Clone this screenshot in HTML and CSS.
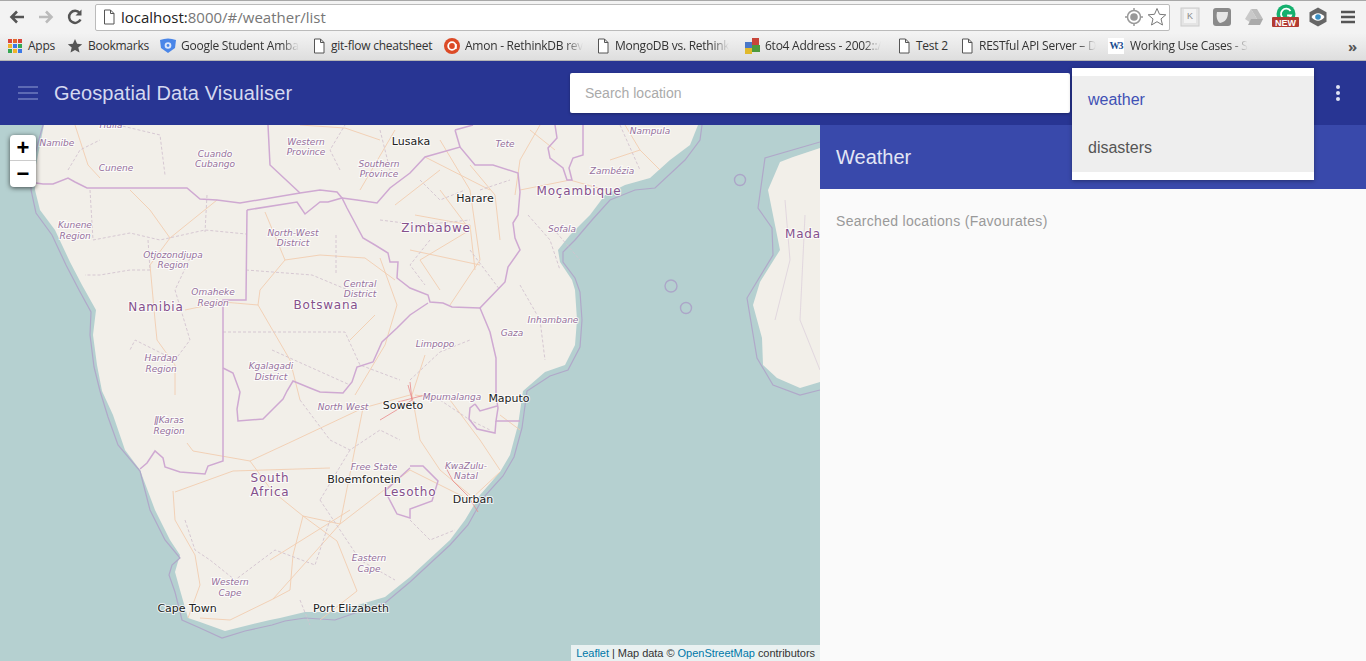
FILE: index.html
```html
<!DOCTYPE html>
<html lang="en">
<head>
    <meta charset="UTF-8">
    <meta name="viewport" content="width=device-width, initial-scale=1.0">
    <title>Geospatial Data Visualiser</title>
    <link rel="stylesheet" href="styles.css">
</head>
<body>
    <svg class="defs" width="0" height="0">
        <symbol id="page" viewBox="0 0 14 16">
            <path d="M2.500 1h6l3.500 3.500v10.500h-9.500z M8.500 1v3.500h3.500" fill="#fff" stroke="#555" stroke-width="1"/>
        </symbol>
    </svg>

    <!-- browser toolbar -->
    <div class="toolbar">
        <svg class="nav" width="20" height="20" viewBox="0 0 20 20"><path d="M17 10H5M10 4.500L4.500 10l5.500 5.500" fill="none" stroke="#555" stroke-width="2.600"/></svg>
        <svg class="nav" width="20" height="20" viewBox="0 0 20 20"><path d="M3 10h12M10 4.500l5.500 5.500-5.500 5.500" fill="none" stroke="#bbb" stroke-width="2.600"/></svg>
        <svg class="nav" width="20" height="20" viewBox="0 0 20 20"><path d="M15.500 12.500a6 6 0 1 1-.8-6.500" fill="none" stroke="#555" stroke-width="2.500"/><path d="M16.500 2.500v6h-6z" fill="#555"/></svg>
        <div class="omnibox">
            <svg class="omni-page" width="14" height="16"><use href="#page"/></svg>
            <span class="url"><span class="url-host">localhost:</span>8000/#/weather/list</span>
            <svg class="omni-icon" width="18" height="18" viewBox="0 0 18 18"><circle cx="9" cy="9" r="6.500" fill="none" stroke="#999" stroke-width="1.500"/><circle cx="9" cy="9" r="3.800" fill="#999"/><path d="M9 0v3M9 15v3M0 9h3M15 9h3" stroke="#999" stroke-width="1.500"/></svg>
            <svg class="omni-icon" width="20" height="20" viewBox="0 0 20 20"><path d="M10 1.500l2.500 5.800 6.300.5-4.800 4.100 1.500 6.100-5.500-3.300-5.500 3.300 1.500-6.100-4.800-4.100 6.300-.5z" fill="#fff" stroke="#777"/></svg>
        </div>
        <div class="extensions">
            <svg width="20" height="20" viewBox="0 0 20 20"><rect x="1" y="1" width="18" height="18" fill="#e4e4e4" stroke="#ccc"/><rect x="4" y="2" width="12" height="14" fill="#f3f3f3"/><text class="ext-k" x="10" y="12" text-anchor="middle">K</text></svg>
            <svg width="20" height="20" viewBox="0 0 20 20"><rect x="1" y="1" width="18" height="18" rx="3" fill="#8a8a8a"/><path d="M5 5h11c0 7-3 10-8 11-3-2-4-6-3-11z" fill="#e6e6e6"/></svg>
            <svg width="20" height="20" viewBox="0 0 20 20"><path d="M7 2h6l6 10h-6z" fill="#bdbdbd"/><path d="M7 2l6 10-3 6-9-6z" fill="#c9c9c9"/><path d="M7 12h12l-3 6H4z" fill="#aaa"/></svg>
            <svg class="ext-g" width="28" height="26" viewBox="0 0 28 26"><circle cx="14" cy="10" r="9.500" fill="#15b06e"/><path d="M18.500 7a5.200 5.200 0 1 0 .6 4.500h-4" fill="none" stroke="#fff" stroke-width="1.800"/><rect x="0" y="13" width="27" height="10" rx="1" fill="#b23a32"/><text class="ext-new" x="13.500" y="21.500" text-anchor="middle">NEW</text></svg>
            <svg width="20" height="20" viewBox="0 0 20 20"><path d="M10 .5l8.500 4.700v9.600L10 19.500l-8.500-4.700V5.200z" fill="#666"/><path d="M3.500 10c3.500-5 9.500-5 13 0-3.500 5-9.500 5-13 0z" fill="#fff"/><circle cx="10" cy="10" r="2.800" fill="#3a8fc4"/></svg>
            <svg width="16" height="16" viewBox="0 0 16 16"><path d="M1 3h14M1 8h14M1 13h14" stroke="#555" stroke-width="2.600"/></svg>
        </div>
    </div>

    <!-- bookmarks -->
    <div class="bookmarks">
        <div class="bm bm-apps">
            <svg width="14" height="14" viewBox="0 0 14 14">
                <path d="M0 0h4v4H0z" fill="#d9453c"/><path d="M5 0h4v4H5z" fill="#e2692c"/><path d="M10 0h4v4h-4z" fill="#d9453c"/>
                <path d="M0 5h4v4H0z" fill="#f1b32c"/><path d="M5 5h4v4H5z" fill="#3b78e7"/><path d="M10 5h4v4h-4z" fill="#36a853"/>
                <path d="M0 10h4v4H0z" fill="#36a853"/><path d="M5 10h4v4H5z" fill="#f1b32c"/><path d="M10 10h4v4h-4z" fill="#3b78e7"/>
            </svg>
            <span class="bm-text">Apps</span>
        </div>
        <div class="bm bm-star">
            <svg width="16" height="16" viewBox="0 0 16 16"><path d="M8 1l2.100 4.700 5.100.5-3.900 3.400 1.200 5L8 11.900l-4.500 2.700 1.200-5L.8 6.200l5.100-.5z" fill="#555"/></svg>
            <span class="bm-text">Bookmarks</span>
        </div>
        <div class="bm bm-google">
            <svg width="16" height="16" viewBox="0 0 16 16"><path d="M0 2q8-3 16 0l-1 8-7 5-7-5z" fill="#4a86e8"/><circle cx="8" cy="7.500" r="3.300" fill="#dbe7fb"/><circle cx="8" cy="7.500" r="1.400" fill="#4a86e8"/></svg>
            <span class="bm-text bm-fade">Google Student Amba</span>
        </div>
        <div class="bm bm-gitflow">
            <svg width="14" height="16"><use href="#page"/></svg>
            <span class="bm-text">git-flow cheatsheet</span>
        </div>
        <div class="bm bm-amon">
            <svg width="16" height="16" viewBox="0 0 16 16"><circle cx="8" cy="8" r="8" fill="#dc4a26"/><circle cx="8" cy="8" r="3.800" fill="none" stroke="#fff" stroke-width="1.800"/><path d="M11.800 6v5" stroke="#fff" stroke-width="1.800"/></svg>
            <span class="bm-text bm-fade">Amon - RethinkDB rev</span>
        </div>
        <div class="bm bm-mongo">
            <svg width="14" height="16"><use href="#page"/></svg>
            <span class="bm-text bm-fade">MongoDB vs. Rethink</span>
        </div>
        <div class="bm bm-6to4">
            <svg width="15" height="16" viewBox="0 0 15 16"><path d="M0 4h7v6H0z" fill="#4a78c8"/><path d="M7 0h7v7H7z" fill="#c8453a"/><path d="M7 7h8v7H7z" fill="#4d9a3c"/><path d="M0 10h7v6H0z" fill="#e0b92c"/></svg>
            <span class="bm-text bm-fade">6to4 Address - 2002::/</span>
        </div>
        <div class="bm bm-test">
            <svg width="14" height="16"><use href="#page"/></svg>
            <span class="bm-text">Test 2</span>
        </div>
        <div class="bm bm-rest">
            <svg width="14" height="16"><use href="#page"/></svg>
            <span class="bm-text bm-fade">RESTful API Server – D</span>
        </div>
        <div class="bm bm-w3">
            <span class="w3-logo">W3</span>
            <span class="bm-text bm-fade">Working Use Cases - S</span>
        </div>
        <span class="bm-more">»</span>
    </div>

    <!-- app header -->
    <header class="app-header">
        <svg class="menu-icon" width="20" height="14" viewBox="0 0 20 14"><path d="M0 1h20M0 7h20M0 13h20" stroke="#6f7cc0" stroke-width="1.600"/></svg>
        <div class="app-title">Geospatial Data Visualiser</div>
        <input class="search" type="text" placeholder="Search location">
        <svg class="kebab" width="6" height="18" viewBox="0 0 6 18"><circle cx="3" cy="3" r="2" fill="#dfe3f5"/><circle cx="3" cy="9" r="2" fill="#dfe3f5"/><circle cx="3" cy="15" r="2" fill="#dfe3f5"/></svg>
    </header>

    <div class="dropdown">
        <ul class="dropdown-list">
            <li class="dropdown-item active">weather</li>
            <li class="dropdown-item">disasters</li>
        </ul>
    </div>

    <div class="main">
        <div class="map">
            <svg class="map-svg" viewBox="0 125 820 536" width="820" height="536">
                <!-- land -->
                <path class="land" d="M44 125L36 165L35 190L40 210L55 230L70 262L82 285L96 310L93 335L97 365L102 391L113 415L125 450L140 470L155 510L170 540L180 555L177 565L175 572L180 590L188 618L200 622L225 631L245 626L270 620L280 618L305 612L340 612L358 605L385 597L410 577L450 540L465 520L480 495L500 472L510 455L518 425L523 391L545 372L565 365L575 345L577 320L575 290L572 280L560 262L558 250L570 235L590 215L605 195L625 185L650 178L670 160L690 145L698 125Z"/>
                <path class="land" d="M820 148L793 157L780 162L768 190L773 215L780 250L760 282L753 305L762 338L763 365L777 378L800 388L820 382Z"/>

                <!-- maritime border -->
                <path class="sea-border" d="M43 125L32 165L31 190L36 213L52 235L66 265L79 290L91 312L90 335L94 367L100 391L108 417L118 445L140 471L150 510L165 540L180 558L172 565L169 575L175 592L182 620L200 628L222 638L245 631L272 625L285 621L305 618L335 620L358 612L385 603L410 582L450 545L468 525L483 498L503 476L514 457L522 428L527 391L550 376L568 370L580 347L582 320L580 292L575 278L563 262L563 252L575 240L592 220L610 200L635 190L655 188L685 160L700 140L702 125"/>
                <path class="sea-border" d="M820 142L765 158L758 208L772 228L773 255L747 298L757 358L773 385L800 395L820 390"/>
                <circle class="islet" cx="740" cy="180" r="5.500"/>
                <circle class="islet" cx="671" cy="286" r="6"/>
                <circle class="islet" cx="686" cy="308" r="5.500"/>

                <!-- roads -->
                <path class="road" d="M75 125L88 165L100 178M130 190L150 210L170 238L217 200M170 238L150 265L155 320L157 340L175 365L175 395M265 212L285 260L260 290L258 305L290 360L300 400M258 305L223 302L185 310M300 125L345 128L380 140M395 130L360 190M285 260L320 255L365 258L395 280M380 258L397 305L385 345L355 395M187 443L193 451L250 461L293 441L363 408L410 395M175 492L233 471L330 468M250 461L272 491L303 516L340 524L410 470M303 516L337 541L357 591L320 620M303 516L293 555L290 590L273 599L230 620L200 618M273 599L340 524M173 491L175 520L195 555L200 585L188 618M340 524L363 408M410 470L470 500L500 472M440 140L470 190L480 260L450 305M410 250L480 265M425 157L490 190M520 190L570 180L605 190M540 125L520 160L515 195M610 160L640 150M625 125L640 150L660 170M415 395L450 400L480 440L500 470M425 355L412 395L420 440M420 440L440 470L470 495M440 190L470 230L420 260L440 290M415 215L470 225L475 270M470 165L495 195L500 240M395 205L440 170M350 340L375 315M530 130L555 150M500 415L520 430M270 560L350 510"/>
                <path class="road-major" d="M410 382L412 400L400 408L380 420M408 385L415 410M398 402L425 395M445 466L453 481L468 496L478 512"/>

                <!-- province lines -->
                <path class="dashed" d="M118 125L160 135L165 175M68 170L80 150L100 140M90 190L93 240L130 233L160 240L205 230L246 234M148 240L150 270L130 270L100 275L85 275M190 258L175 290L190 340L175 360L135 340L130 350M246 270L312 275L360 295M223 332L345 332L360 365L400 380M272 350L350 385M336 235L336 275M207 195L205 232M340 170L330 150L345 125M380 130L390 170M380 220L420 225L470 220M480 190L510 180M550 225L580 260M528 215L550 240L560 270M520 285L540 320L545 360M410 380L440 352L470 340M440 400L470 420L490 430M300 400L330 440L350 450L380 430L400 440M350 450L320 500M320 500L360 560L395 580M185 520L195 550L210 560L235 580L275 550L315 565L330 520M410 520L430 540L455 530M300 600L310 625M620 125L640 170M420 180L440 200L465 190M430 240L410 265L425 285M470 250L500 290"/>

                <!-- national borders -->
                <path class="border" d="M36 183L43 184L53 184L68 178L75 182L87 188L187 188L200 199L217 200L240 203L300 193L320 190L337 192L342 198"/>
                <path class="border" d="M247 210L297 202L305 214L320 202L328 202L342 198L347 208L355 223L363 238L375 245L388 253L390 262L398 262L397 278L410 288L428 295L430 302L443 303L452 307L480 308"/>
                <path class="border" d="M247 210L246 300L223 300L223 461L208 466L205 474L180 472L165 467L163 458L155 451L147 463L140 469"/>
                <path class="border" d="M223 368L233 373L240 392L237 409L238 421L263 419L273 409L283 399L287 391L293 381L310 388L320 392L343 393L352 382L357 367L373 362L382 342L397 328L410 315L428 303"/>
                <path class="border" d="M268 125L270 165L300 193M342 198L357 200L377 203L390 188L410 173L425 157L460 147L475 165L493 165L518 173L520 192L518 215L513 223L515 238L520 250L508 267L505 282L480 308L490 332L496 358L496 395L498 408L496 421L520 421"/>
                <path class="border" d="M455 130L460 147M455 130L473 125M555 125L557 138L548 148L550 158L563 168L567 180L572 180L569 168L573 158L583 155L583 125"/>
                <path class="border" d="M475 404L470 408L469 419L477 429L495 433L496 421M475 404L480 411L497 406"/>
                <path class="border" d="M410 466L423 466L438 481L432 501L410 509L410 518L397 514L385 491L410 468"/>
                <path class="border-thin" d="M785 200L790 260L775 320M805 215L800 320L820 370"/>

                <!-- regions -->
                <text class="region" x="111" y="128">Huíla</text>
                <text class="region" x="57" y="146">Namibe</text>
                <text class="region" x="116" y="171">Cunene</text>
                <text class="region" x="215" y="157">Cuando</text>
                <text class="region" x="215" y="167">Cubango</text>
                <text class="region" x="306" y="145">Western</text>
                <text class="region" x="306" y="155">Province</text>
                <text class="region" x="379" y="167">Southern</text>
                <text class="region" x="379" y="177">Province</text>
                <text class="region" x="505" y="147">Tete</text>
                <text class="region" x="650" y="134">Nampula</text>
                <text class="region" x="612" y="174">Zambézia</text>
                <text class="region" x="562" y="232">Sofala</text>
                <text class="region" x="75" y="228">Kunene</text>
                <text class="region" x="75" y="239">Region</text>
                <text class="region" x="173" y="258">Otjozondjupa</text>
                <text class="region" x="173" y="268">Region</text>
                <text class="region" x="293" y="236">North-West</text>
                <text class="region" x="293" y="246">District</text>
                <text class="region" x="360" y="287">Central</text>
                <text class="region" x="360" y="297">District</text>
                <text class="region" x="213" y="295">Omaheke</text>
                <text class="region" x="213" y="306">Region</text>
                <text class="region" x="512" y="336">Gaza</text>
                <text class="region" x="553" y="323">Inhambane</text>
                <text class="region" x="435" y="347">Limpopo</text>
                <text class="region" x="161" y="361">Hardap</text>
                <text class="region" x="161" y="372">Region</text>
                <text class="region" x="271" y="369">Kgalagadi</text>
                <text class="region" x="271" y="380">District</text>
                <text class="region" x="343" y="410">North West</text>
                <text class="region" x="452" y="400">Mpumalanga</text>
                <text class="region" x="169" y="423">ǁKaras</text>
                <text class="region" x="169" y="434">Region</text>
                <text class="region" x="374" y="470">Free State</text>
                <text class="region" x="466" y="469">KwaZulu-</text>
                <text class="region" x="466" y="479">Natal</text>
                <text class="region" x="369" y="561">Eastern</text>
                <text class="region" x="369" y="572">Cape</text>
                <text class="region" x="230" y="585">Western</text>
                <text class="region" x="230" y="596">Cape</text>

                <!-- countries -->
                <text class="country" x="579" y="195">Moçambique</text>
                <text class="country" x="436" y="232">Zimbabwe</text>
                <text class="country" x="156" y="311">Namibia</text>
                <text class="country" x="326" y="309">Botswana</text>
                <text class="country" x="270" y="482">South</text>
                <text class="country" x="270" y="496">Africa</text>
                <text class="country" x="410" y="496">Lesotho</text>
                <text class="country country-start" x="785" y="238">Mada</text>

                <!-- cities -->
                <text class="city" x="411" y="145">Lusaka</text>
                <text class="city" x="475" y="202">Harare</text>
                <text class="city" x="403" y="409">Soweto</text>
                <text class="city" x="509" y="402">Maputo</text>
                <text class="city" x="364" y="483">Bloemfontein</text>
                <text class="city" x="473" y="503">Durban</text>
                <text class="city" x="187" y="612">Cape Town</text>
                <text class="city" x="351" y="612">Port Elizabeth</text>
            </svg>
            <div class="zoom-control">
                <div class="zoom-btn zoom-in">+</div>
                <div class="zoom-btn">−</div>
            </div>
            <div class="attribution"><span class="attr-link">Leaflet</span> | Map data © <span class="attr-link">OpenStreetMap</span> contributors</div>
        </div>
        <div class="panel">
            <div class="panel-head">Weather</div>
            <div class="panel-body">Searched locations (Favourates)</div>
        </div>
    </div>
</body>
</html>
```

FILE: styles.css
```css
* {
    box-sizing: border-box;
}
html, body {
    height: 100%;
}
body {
    margin: 0;
    font-family: "Liberation Sans", Arial, sans-serif;
    overflow: hidden;
    background: #fafafa;
}
.defs {
    display: block;
    height: 0;
}

/* browser chrome */
.toolbar {
    height: 33px;
    display: flex;
    align-items: center;
    padding-left: 7px;
    border-top: 1px solid #a8a8a8;
    background: #f3f3f3;
}
.nav {
    margin-right: 9px;
    flex: none;
}
.omnibox {
    width: 1075px;
    height: 27px;
    margin-left: 1px;
    display: flex;
    align-items: center;
    padding: 0 2px 0 6px;
    background: #fff;
    border: 1px solid #bbb;
    border-radius: 2px;
}
.omni-page {
    margin-right: 5px;
}
.url {
    flex: 1;
    font-family: "Open Sans", sans-serif;
    font-size: 15px;
    color: #777;
}
.url-host {
    color: #222;
}
.omni-icon {
    margin-left: 4px;
}
.extensions {
    display: flex;
    align-items: center;
    margin-left: 10px;
    gap: 12px;
}
.ext-k {
    font-family: "Liberation Sans", sans-serif;
    font-size: 9px;
    fill: #888;
}
.ext-new {
    font-family: "Liberation Sans", sans-serif;
    font-size: 9px;
    font-weight: bold;
    fill: #fff;
}
.ext-g {
    margin: 0 -4px;
}
.bookmarks {
    height: 28px;
    display: flex;
    align-items: center;
    padding: 0 0 2px 8px;
    background: linear-gradient(#f3f3f3, #dedede);
    border-bottom: 1px solid #b5b5b5;
    font-family: "Open Sans", sans-serif;
    font-size: 12px;
    letter-spacing: -.25px;
    color: #333;
}
.bm {
    display: flex;
    align-items: center;
    gap: 5px;
    flex: none;
}
.bm svg {
    flex: none;
}
.bm-text {
    white-space: nowrap;
}
.bm-fade {
    -webkit-mask-image: linear-gradient(to right, #000 85%, transparent);
    mask-image: linear-gradient(to right, #000 85%, transparent);
}
.bm-apps { width: 59px; gap: 6px; }
.bm-star { width: 93px; }
.bm-google { width: 152px; }
.bm-gitflow { width: 132px; }
.bm-amon { width: 152px; }
.bm-mongo { width: 149px; }
.bm-6to4 { width: 152px; }
.bm-test { width: 63px; }
.bm-rest { width: 148px; }
.bm-w3 { width: 150px; gap: 6px; }
.w3-logo {
    width: 16px;
    height: 16px;
    font-family: "Liberation Serif", serif;
    font-size: 10px;
    font-weight: bold;
    letter-spacing: -1px;
    line-height: 16px;
    text-align: center;
    color: #1b4d8f;
    background: #fff;
}
.bm-more {
    margin-left: auto;
    margin-right: 9px;
    font-size: 15px;
    font-weight: bold;
    color: #555;
}

/* app */
.app-header {
    height: 64px;
    display: flex;
    align-items: center;
    padding-left: 18px;
    background: #283593;
}
.menu-icon {
    flex: none;
    margin-right: 16px;
}
.app-title {
    width: 516px;
    font-size: 20px;
    letter-spacing: .11px;
    color: #d5d9f0;
}
.search {
    width: 500px;
    height: 40px;
    padding: 0 15px;
    border: none;
    border-radius: 2px;
    background: #fff;
    font-family: "Liberation Sans", Arial, sans-serif;
    font-size: 14px;
    box-shadow: 0 1px 3px rgba(0, 0, 0, .3);
}
.search::placeholder {
    color: #aaa;
    opacity: 1;
}
.kebab {
    margin-left: 265px;
}
.dropdown {
    position: absolute;
    left: 1072px;
    top: 68px;
    width: 242px;
    height: 112px;
    padding: 8px 0;
    background: #fff;
    box-shadow: 0 1px 4px rgba(0, 0, 0, .35);
    z-index: 5;
}
.dropdown-list {
    margin: 0;
    padding: 0;
    list-style: none;
    background: #eee;
}
.dropdown-item {
    height: 48px;
    line-height: 47px;
    padding-left: 16px;
    font-size: 16px;
    color: #555;
}
.dropdown-item.active {
    color: #3f51b5;
}
.main {
    display: flex;
    height: 536px;
}
.map {
    position: relative;
    width: 820px;
    flex: none;
    overflow: hidden;
    background: #b5d0d0;
}
.map-svg {
    display: block;
}
.panel {
    flex: 1;
    background: #fafafa;
}
.panel-head {
    height: 64px;
    padding-left: 16px;
    line-height: 64px;
    font-size: 20px;
    color: #e3e6f5;
    background: #3949ab;
}
.panel-body {
    padding: 24px 16px;
    font-size: 14px;
    line-height: 16px;
    letter-spacing: .3px;
    color: #999;
}

/* map drawing */
.land {
    fill: #f2efe9;
}
.sea-border {
    fill: none;
    stroke: #b0a8c9;
    stroke-width: 1.200;
}
.islet {
    fill: none;
    stroke: #aca6c8;
    stroke-width: 1.400;
}
.road {
    fill: none;
    stroke: #f2cdb0;
    stroke-width: .9;
}
.road-major {
    fill: none;
    stroke: #e98a8a;
    stroke-width: .8;
}
.dashed {
    fill: none;
    stroke: #d2c3cf;
    stroke-width: .9;
    stroke-dasharray: 3 2;
}
.border {
    fill: none;
    stroke: #cfa9d2;
    stroke-width: 1.500;
}
.border-thin {
    fill: none;
    stroke: #ddd0dc;
    stroke-width: .8;
}
.region, .country, .city {
    font-family: "DejaVu Sans", sans-serif;
    text-anchor: middle;
    paint-order: stroke;
    stroke: rgba(255, 255, 255, .75);
    stroke-width: 2px;
}
.region {
    font-size: 9px;
    font-style: italic;
    fill: #96709c;
}
.country {
    font-size: 12px;
    letter-spacing: .8px;
    fill: #85508c;
}
.city {
    font-size: 11px;
    fill: #222;
}
.country-start {
    text-anchor: start;
}

/* leaflet controls */
.zoom-control {
    position: absolute;
    left: 10px;
    top: 10px;
    width: 26px;
    border-radius: 4px;
    overflow: hidden;
    background: #fff;
    box-shadow: 0 1px 5px rgba(0, 0, 0, .65);
}
.zoom-btn {
    height: 26px;
    font-size: 22px;
    font-weight: bold;
    line-height: 26px;
    text-align: center;
    color: #000;
}
.zoom-in {
    border-bottom: 1px solid #ccc;
}
.attribution {
    position: absolute;
    right: 0;
    bottom: 0;
    height: 16px;
    padding: 0 5px;
    font-size: 11px;
    letter-spacing: -.03px;
    line-height: 16px;
    color: #333;
    background: rgba(255, 255, 255, .7);
}
.attr-link {
    color: #0078a8;
}
```
